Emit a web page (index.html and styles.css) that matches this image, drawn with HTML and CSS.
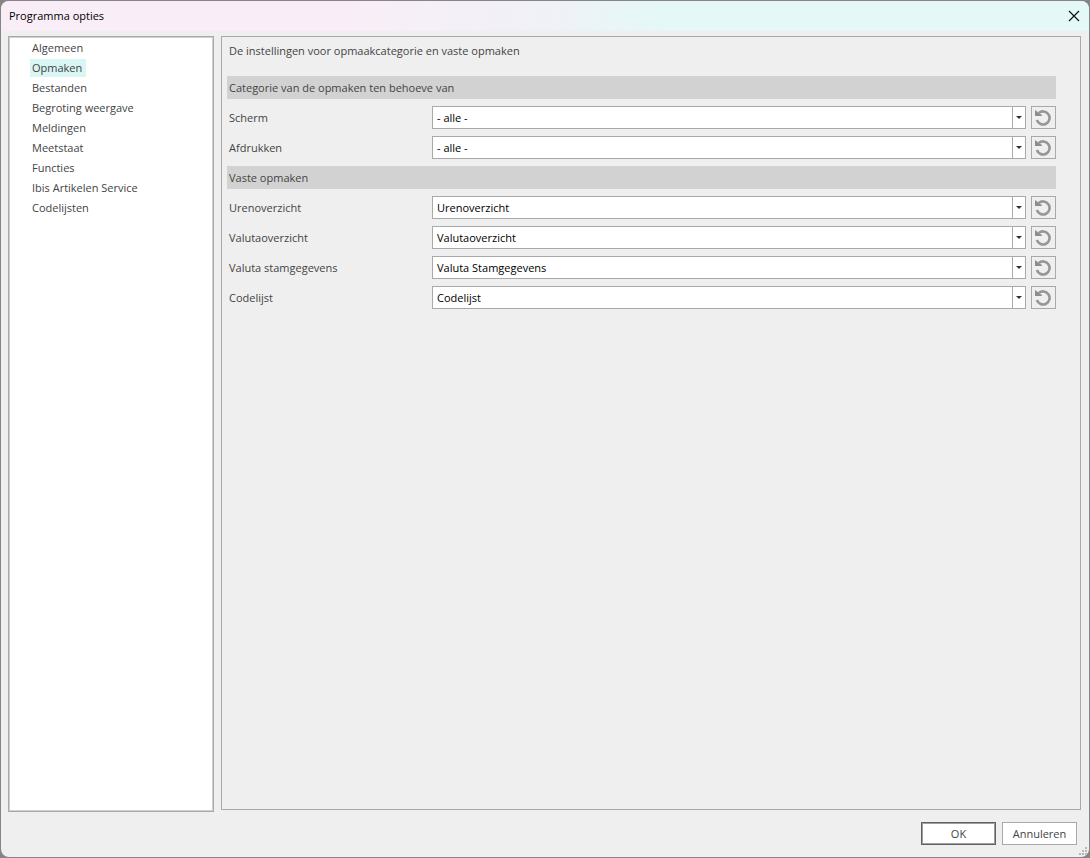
FILE: index.html
```html
<!DOCTYPE html>
<html lang="nl">
<head>
<meta charset="utf-8">
<title>Programma opties</title>
<link rel="stylesheet" href="styles.css">
</head>
<body>
<svg class="defs" aria-hidden="true">
  <symbol id="undo" viewBox="0 0 17 17">
    <path d="M3.6 4.2A6.5 6.5 0 1 1 1.9 11" fill="none" stroke="#969696" stroke-width="2.6"/>
    <path d="M0 1v6h6.8V5.4L4.4 5 1.8 2.2z" fill="#8c8c8c"/>
  </symbol>
</svg>
<main class="window">
  <header class="titlebar">
    <h1 class="title">Programma opties</h1>
    <button class="close" type="button" aria-label="Sluiten">
      <svg width="12" height="12" viewBox="0 0 12 12"><path d="M1 1l10 10M11 1L1 11" stroke="#111" stroke-width="1.2"/></svg>
    </button>
  </header>
  <div class="content">
    <nav class="categories">
      <a class="category" href="#">Algemeen</a>
      <a class="category selected" href="#" aria-current="page">Opmaken</a>
      <a class="category" href="#">Bestanden</a>
      <a class="category" href="#">Begroting weergave</a>
      <a class="category" href="#">Meldingen</a>
      <a class="category" href="#">Meetstaat</a>
      <a class="category" href="#">Functies</a>
      <a class="category" href="#">Ibis Artikelen Service</a>
      <a class="category" href="#">Codelijsten</a>
    </nav>
    <section class="panel">
      <p class="intro">De instellingen voor opmaakcategorie en vaste opmaken</p>
      <h2 class="group">Categorie van de opmaken ten behoeve van</h2>
      <div class="row">
        <label class="label" for="scherm">Scherm</label>
        <div class="combo"><select class="select" id="scherm"><option>- alle -</option></select></div>
        <button class="reset" type="button" aria-label="Scherm herstellen"><svg class="icon"><use href="#undo"/></svg></button>
      </div>
      <div class="row">
        <label class="label" for="afdrukken">Afdrukken</label>
        <div class="combo"><select class="select" id="afdrukken"><option>- alle -</option></select></div>
        <button class="reset" type="button" aria-label="Afdrukken herstellen"><svg class="icon"><use href="#undo"/></svg></button>
      </div>
      <h2 class="group">Vaste opmaken</h2>
      <div class="row">
        <label class="label" for="uren">Urenoverzicht</label>
        <div class="combo"><select class="select" id="uren"><option>Urenoverzicht</option></select></div>
        <button class="reset" type="button" aria-label="Urenoverzicht herstellen"><svg class="icon"><use href="#undo"/></svg></button>
      </div>
      <div class="row">
        <label class="label" for="valuta">Valutaoverzicht</label>
        <div class="combo"><select class="select" id="valuta"><option>Valutaoverzicht</option></select></div>
        <button class="reset" type="button" aria-label="Valutaoverzicht herstellen"><svg class="icon"><use href="#undo"/></svg></button>
      </div>
      <div class="row">
        <label class="label" for="stam">Valuta stamgegevens</label>
        <div class="combo"><select class="select" id="stam"><option>Valuta Stamgegevens</option></select></div>
        <button class="reset" type="button" aria-label="Valuta stamgegevens herstellen"><svg class="icon"><use href="#undo"/></svg></button>
      </div>
      <div class="row">
        <label class="label" for="codelijst">Codelijst</label>
        <div class="combo"><select class="select" id="codelijst"><option>Codelijst</option></select></div>
        <button class="reset" type="button" aria-label="Codelijst herstellen"><svg class="icon"><use href="#undo"/></svg></button>
      </div>
    </section>
  </div>
  <footer class="footer">
    <button class="button default" type="button">OK</button>
    <button class="button" type="button">Annuleren</button>
  </footer>
  <svg class="grip" width="8" height="8" viewBox="0 0 8 8" aria-hidden="true"><path d="M6 0h2v2H6zM3 3h2v2H3zM6 3h2v2H6zM0 6h2v2H0zM3 6h2v2H3zM6 6h2v2H6z" fill="#b8b8b8"/></svg>
</main>
</body>
</html>
```
FILE: styles.css
```css
* { box-sizing: border-box; }
body {
  margin: 0;
  padding: 1px;
  min-height: 100vh;
  display: flex;
  background: #858585;
  color: #444;
  font: 11px/20px "Open Sans", "Noto Sans", sans-serif;
}
button, select { font: inherit; color: inherit; padding: 0; margin: 0; border-radius: 0; }
.defs { position: absolute; width: 0; height: 0; }
.window {
  position: relative;
  flex: 1;
  display: flex;
  flex-direction: column;
  background: #efefef;
  border-radius: 8px;
  overflow: hidden;
}
.titlebar {
  display: flex;
  align-items: center;
  justify-content: space-between;
  height: 30px;
  padding: 0 9px 0 8px;
  background: linear-gradient(90deg, #f9eef7 0, #f9eef7 32%, #f0f1f7 50%, #e4f8f7 61%, #e4f8f7 100%);
}
.title { margin: 0; font-size: 11px; font-weight: 400; color: #000; }
.close { display: flex; border: 0; background: none; }
.content { flex: 1; display: flex; gap: 7px; padding: 5px 8px 0 7px; }
.categories {
  display: flex;
  flex-direction: column;
  align-items: flex-start;
  width: 206px;
  padding: 1px 0 0 21px;
  background: #fff;
  border: 1px solid #a9a9a9;
  box-shadow: inset 0 0 0 1px #d0d0d0;
}
.category {
  margin: 1px 0;
  padding: 0 4px 0 2px;
  line-height: 18px;
  color: #444;
  text-decoration: none;
}
.selected { background: #d9f5f4; }
.panel {
  flex: 1;
  margin-bottom: 2px;
  padding: 4px 24px 0 5px;
  border: 1px solid #a9a9a9;
}
.intro { margin: 0 0 15px; padding-left: 2px; }
.group {
  margin: 0 0 7px;
  padding-left: 2px;
  font-size: 11px;
  line-height: 23px;
  font-weight: 400;
  background: #d2d2d2;
}
.row { display: flex; align-items: center; height: 23px; margin-bottom: 7px; padding-left: 2px; }
.label { width: 203px; }
.combo { position: relative; flex: 1; height: 23px; margin-right: 5px; }
.select {
  width: 100%;
  height: 23px;
  padding: 0 18px 0 4px;
  appearance: none;
  color: #000;
  background: #fff;
  border: 1px solid #a9a9a9;
}
.combo::before {
  content: "";
  position: absolute;
  top: 1px;
  right: 13px;
  width: 1px;
  height: 21px;
  background: #a9a9a9;
}
.combo::after {
  content: "";
  position: absolute;
  top: 10px;
  right: 4px;
  border: solid transparent;
  border-width: 3px 3px 0;
  border-top-color: #333;
}
.reset {
  display: grid;
  place-items: center;
  width: 25px;
  height: 23px;
  background: #efefef;
  border: 1px solid #a9a9a9;
}
.icon { width: 17px; height: 17px; }
.footer { display: flex; justify-content: flex-end; gap: 6px; padding: 10px 12px 12px; }
.button { width: 75px; height: 23px; background: #fff; border: 1px solid #a9a9a9; }
.default { border-color: #606060; box-shadow: inset 0 0 0 1px #a0a0a0; }
.grip { position: absolute; right: 2px; bottom: 2px; }
```
